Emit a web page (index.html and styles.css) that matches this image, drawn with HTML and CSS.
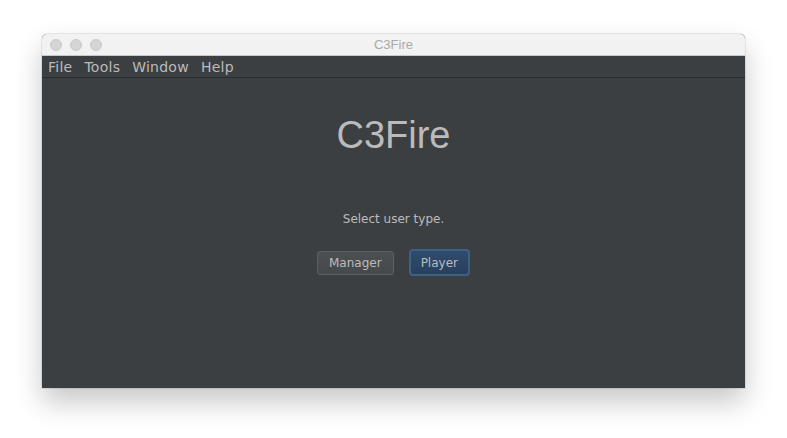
FILE: index.html
```html
<!doctype html>
<html lang="en">

<head>
    <meta charset="utf-8">
    <title>C3Fire</title>
    <meta name="viewport" content="width=device-width, initial-scale=1">
    <link rel="stylesheet" href="styles.css">
</head>

<body>
    <div class="window">
        <div class="titlebar">
            <div class="lights">
                <span class="light"></span>
                <span class="light"></span>
                <span class="light"></span>
            </div>
            <span class="title">C3Fire</span>
        </div>
        <div class="menubar">
            <span class="menu">File</span>
            <span class="menu">Tools</span>
            <span class="menu">Window</span>
            <span class="menu">Help</span>
        </div>
        <div class="content">
            <h1 class="app-name">C3Fire</h1>
            <p class="prompt">Select user type.</p>
            <div class="buttons">
                <button class="btn">Manager</button>
                <button class="btn btn-focus">Player</button>
            </div>
        </div>
    </div>
</body>

</html>
```
FILE: styles.css
```css
* {
    margin: 0;
    box-sizing: border-box;
}

html,
body {
    background: #fff;
    height: 100%;
}

body {
    padding: 34px 0 0 42px;
    font-family: "DejaVu Sans", sans-serif;
}

.window {
    width: 703px;
    height: 354px;
    display: flex;
    flex-direction: column;
    background: #3c3f41;
    border-radius: 5px 5px 0 0;
    box-shadow: 0 14px 28px rgba(0, 0, 0, 0.22), 0 0 0 1px rgba(0, 0, 0, 0.08);
}

.titlebar {
    height: 22px;
    position: relative;
    display: flex;
    align-items: center;
    justify-content: center;
    background: #f2f2f2;
    border-bottom: 1px solid #c9c9c9;
    border-radius: 5px 5px 0 0;
}

.lights {
    position: absolute;
    left: 8px;
    top: 5px;
    display: flex;
    gap: 8px;
}

.light {
    width: 12px;
    height: 12px;
    border-radius: 50%;
    background: #d5d5d5;
    border: 1px solid #cacaca;
}

.title {
    font-family: "Liberation Sans", sans-serif;
    font-size: 13px;
    color: #a9a9a9;
}

.menubar {
    height: 22px;
    display: flex;
    align-items: center;
    padding-left: 6px;
    background: #3c3f41;
    border-bottom: 1px solid #2b2b2b;
}

.menu {
    font-size: 14px;
    letter-spacing: 0.25px;
    color: #bbbbbb;
    margin-right: 12px;
}

.content {
    flex: 1;
    display: flex;
    flex-direction: column;
    align-items: center;
    padding-top: 35px;
}

.app-name {
    font-family: "Liberation Sans", sans-serif;
    font-size: 38px;
    line-height: 44px;
    font-weight: 400;
    color: #bbbbbb;
}

.prompt {
    margin-top: 55px;
    font-size: 12px;
    color: #bbbbbb;
}

.buttons {
    margin-top: 23px;
    display: flex;
    align-items: center;
    gap: 15px;
}

.btn {
    height: 24px;
    padding: 0 11px;
    font-family: "DejaVu Sans", sans-serif;
    font-size: 12px;
    color: #bbbbbb;
    background: linear-gradient(#4c5052, #46494b);
    border: 1px solid #5e6060;
    border-radius: 3px;
}

.btn-focus {
    height: 27px;
    padding: 0 10px;
    background: linear-gradient(#2f4b6d, #28405e);
    border: 2px solid #3d6185;
    border-radius: 4px;
}
```
